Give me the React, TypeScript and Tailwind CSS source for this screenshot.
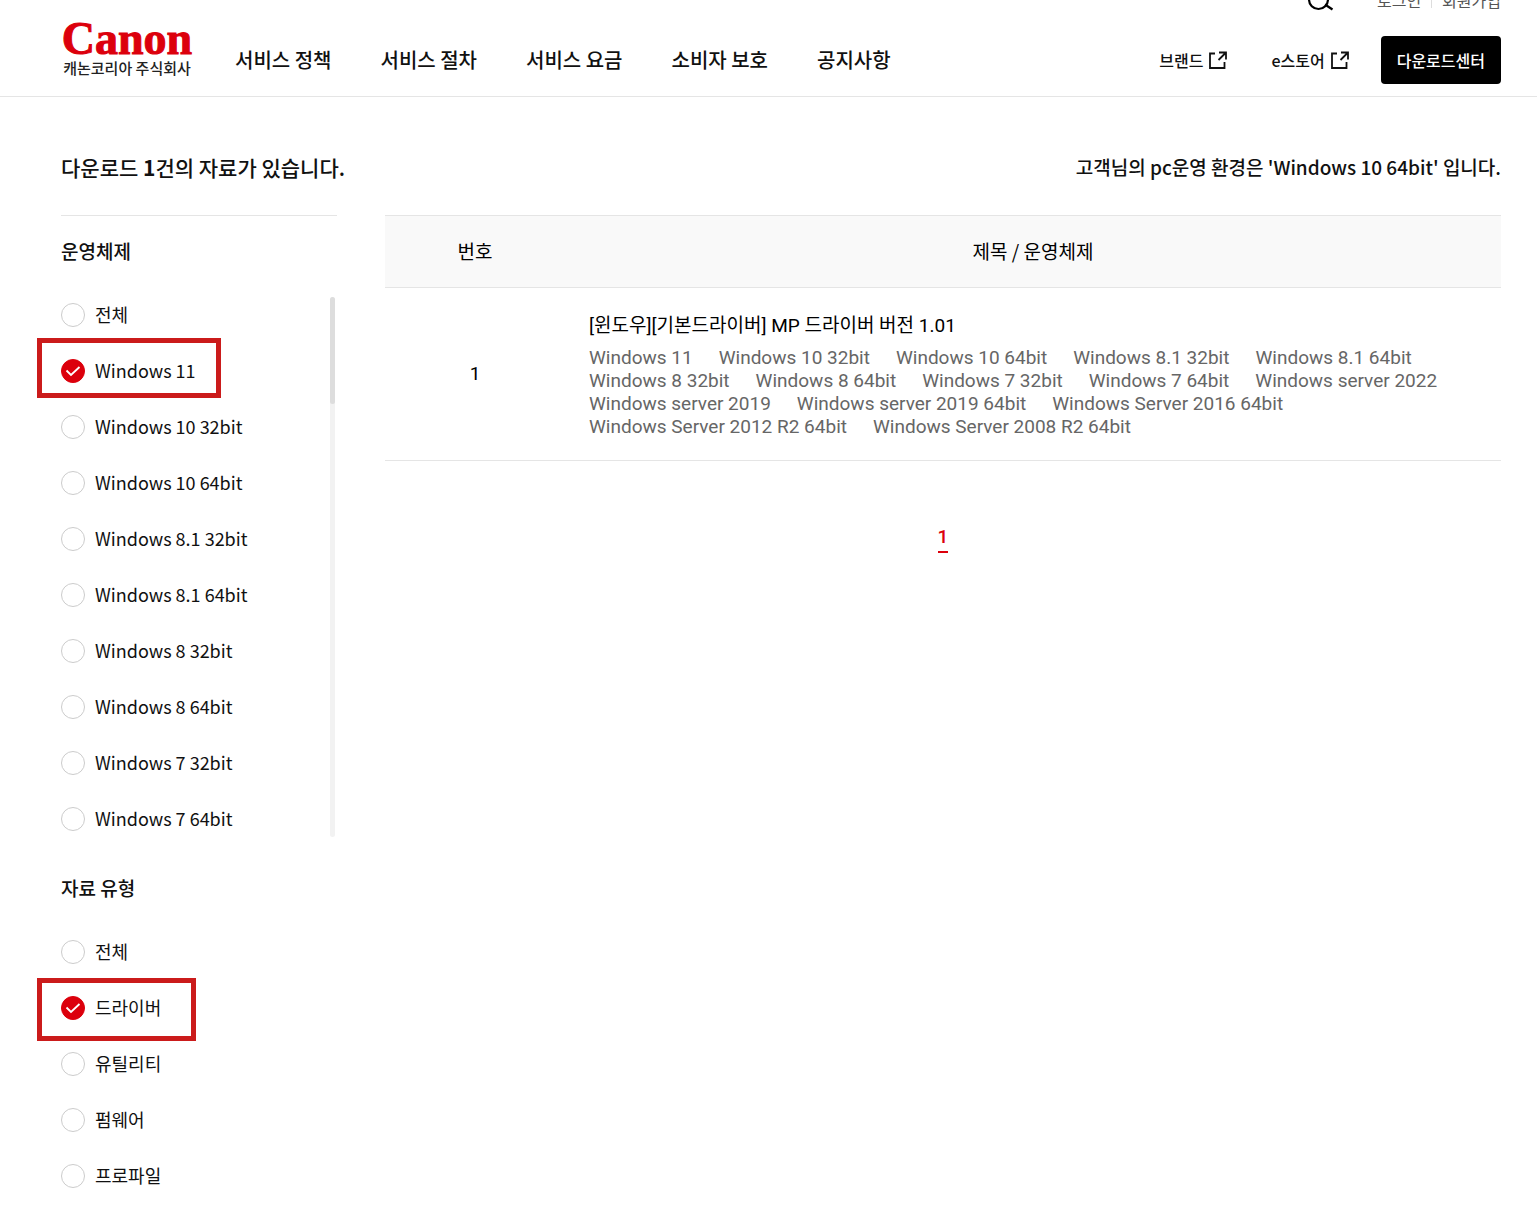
import React, { useState } from 'react';
import clsx from 'clsx';

const NAV_ITEMS = ['서비스 정책', '서비스 절차', '서비스 요금', '소비자 보호', '공지사항'];

const OS_OPTIONS = [
  '전체',
  'Windows 11',
  'Windows 10 32bit',
  'Windows 10 64bit',
  'Windows 8.1 32bit',
  'Windows 8.1 64bit',
  'Windows 8 32bit',
  'Windows 8 64bit',
  'Windows 7 32bit',
  'Windows 7 64bit',
];

const TYPE_OPTIONS = ['전체', '드라이버', '유틸리티', '펌웨어', '프로파일'];

const DOWNLOADS = [
  {
    id: 1,
    title: '[윈도우][기본드라이버] MP 드라이버 버전 1.01',
    systems: [
      'Windows 11',
      'Windows 10 32bit',
      'Windows 10 64bit',
      'Windows 8.1 32bit',
      'Windows 8.1 64bit',
      'Windows 8 32bit',
      'Windows 8 64bit',
      'Windows 7 32bit',
      'Windows 7 64bit',
      'Windows server 2022',
      'Windows server 2019',
      'Windows server 2019 64bit',
      'Windows Server 2016 64bit',
      'Windows Server 2012 R2 64bit',
      'Windows Server 2008 R2 64bit',
    ],
  },
];

const ExternalIcon = () => (
  <svg viewBox="0 0 20 20" className="h-5 w-5" fill="none" stroke="currentColor" strokeWidth="1.8" aria-hidden="true">
    <path d="M7 3.5H2V18h14.5v-6" />
    <path d="M11 2.5h7v7M18 2.5L10.5 10" />
  </svg>
);

const SearchIcon = () => (
  <svg viewBox="0 0 28 28" className="h-7 w-7" fill="none" stroke="currentColor" strokeWidth="2.2" aria-hidden="true">
    <circle cx="12.5" cy="15.5" r="9.5" />
    <path d="M19 20.5l7.500 5" />
  </svg>
);

const Header = () => (
  <header className="overflow-hidden border-b border-[#e5e5e5] pr-9 pl-[61px]">
    {/* Utility bar */}
    <div className="-mt-4 flex h-7 items-center justify-end text-base leading-7 text-[#555]">
      <button type="button" aria-label="검색" className="mr-[43px] text-black">
        <SearchIcon />
      </button>
      <a href="#login" className="pt-1">로그인</a>
      <span className="mx-[10px] h-5 w-px bg-[#ddd]" />
      <a href="#join" className="pt-1">회원가입</a>
    </div>

    {/* Main bar */}
    <div className="flex items-end pt-2 pb-3">
      <a href="#home" className="mr-[42px] flex w-[132px] shrink-0 flex-col pb-[6px]">
        <span className="text-center font-['Liberation_Serif',serif] text-[46px] leading-[38px] font-bold text-[#dc000c] [-webkit-text-stroke:1px_#dc000c]">
          Canon
        </span>
        <span className="text-center text-[15px] leading-5 font-medium whitespace-nowrap text-[#222]">
          캐논코리아 주식회사
        </span>
      </a>
      <nav className="flex h-12 items-center gap-[49px] text-xl font-medium">
        {NAV_ITEMS.map((item) => (
          <a key={item} href="#nav">
            {item}
          </a>
        ))}
      </nav>
      <div className="ml-auto flex h-12 items-center text-base font-medium">
        <a href="#brand" className="mr-[43px] flex items-center gap-[5px]">
          브랜드
          <ExternalIcon />
        </a>
        <a href="#store" className="mr-[31px] flex items-center gap-[5px]">
          e스토어
          <ExternalIcon />
        </a>
        <button type="button" className="h-12 rounded bg-black px-4 text-white">
          다운로드센터
        </button>
      </div>
    </div>
  </header>
);

interface RadioListProps {
  name: string;
  options: string[];
  value: string;
  onChange: (value: string) => void;
  frame: string;
}

const RadioList: React.FC<RadioListProps> = ({ name, options, value, onChange, frame }) => (
  <div className="flex flex-1 flex-col items-start gap-8 pt-[6px]">
    {options.map((option) => (
      <label key={option} className="relative flex h-6 cursor-pointer items-center gap-[10px] text-lg leading-6">
        <span className="relative h-6 w-6">
          <input
            type="radio"
            name={name}
            checked={value === option}
            onChange={() => onChange(option)}
            className="block h-6 w-6 appearance-none rounded-full border border-[#ccc] checked:border-[#dc000c] checked:bg-[#dc000c]"
          />
          {value === option && (
            <svg viewBox="0 0 24 24" className="pointer-events-none absolute inset-0 h-6 w-6" fill="none" stroke="white" strokeWidth="1.8">
              <path d="M5.500 11.500l4.500 4.500 8.500-8" />
            </svg>
          )}
        </span>
        <span className="pb-0.5">{option}</span>
        {value === option && (
          <span className={clsx('pointer-events-none absolute border-[5px] border-[#cb1b1b]', frame)} />
        )}
      </label>
    ))}
  </div>
);

const Filters = () => {
  const [os, setOs] = useState('Windows 11');
  const [type, setType] = useState('드라이버');

  return (
    <aside className="w-[276px] shrink-0 border-t border-[#e5e5e5]">
      <fieldset>
        <legend className="pt-[21px] text-[19px] leading-7 font-medium">운영체제</legend>
        <div className="mt-8 flex h-[540px] pr-[2px]">
          <RadioList
            name="os"
            options={OS_OPTIONS}
            value={os}
            onChange={setOs}
            frame="-top-[21px] -right-[25px] -bottom-[15px] -left-6"
          />
          <div className="h-full w-[5px] rounded-full bg-[#f2f2f2]">
            <div className="h-[107px] rounded-full bg-[#ddd]" />
          </div>
        </div>
      </fieldset>
      <fieldset className="mt-[37px]">
        <legend className="text-[19px] leading-7 font-medium">자료 유형</legend>
        <div className="mt-8 flex">
          <RadioList
            name="type"
            options={TYPE_OPTIONS}
            value={type}
            onChange={setType}
            frame="-top-[18px] -right-[35px] -bottom-[21px] -left-6"
          />
        </div>
      </fieldset>
    </aside>
  );
};

const DownloadTable = () => (
  <section className="min-w-0 flex-1">
    <table className="w-full table-fixed border-collapse text-black">
      <thead>
        <tr className="h-[72px] border-y border-[#e5e5e5] bg-[#f9f9f9] text-[19px]">
          <th scope="col" className="w-[180px] font-normal">번호</th>
          <th scope="col" className="font-normal">제목 / 운영체제</th>
        </tr>
      </thead>
      <tbody className="font-[Roboto,'Noto_Sans_CJK_KR',sans-serif] text-[19px]">
        {DOWNLOADS.map((item) => (
          <tr key={item.id} className="border-b border-[#e5e5e5]">
            <td className="text-center">{item.id}</td>
            <td className="pt-6 pb-[22px] pl-6">
              <a href="#download" className="block leading-7">
                {item.title}
              </a>
              <ul className="mt-[6px] flex flex-wrap gap-x-[26px] leading-[23px] text-[#666]">
                {item.systems.map((system) => (
                  <li key={system}>{system}</li>
                ))}
              </ul>
            </td>
          </tr>
        ))}
      </tbody>
    </table>
    <nav aria-label="페이지" className="mt-[62px] flex justify-center">
      <a href="#page-1" aria-current="page" className="border-b-2 border-[#dc000c] font-[Roboto,sans-serif] text-[19px] leading-7 font-medium text-[#dc000c]">
        1
      </a>
    </nav>
  </section>
);

export default function App() {
  return (
    <div className="bg-white font-['Noto_Sans_CJK_KR',sans-serif] text-[#111]">
      <Header />
      <main className="pt-[55px] pr-9 pb-10 pl-[61px]">
        <div className="flex items-center justify-between leading-[30px] font-medium">
          <h1 className="text-[21px]">
            다운로드 <strong className="font-bold">1</strong>건의 자료가 있습니다.
          </h1>
          <p className="text-[19px]">고객님의 pc운영 환경은 'Windows 10 64bit' 입니다.</p>
        </div>
        <div className="mt-[33px] flex gap-12">
          <Filters />
          <DownloadTable />
        </div>
      </main>
    </div>
  );
}
